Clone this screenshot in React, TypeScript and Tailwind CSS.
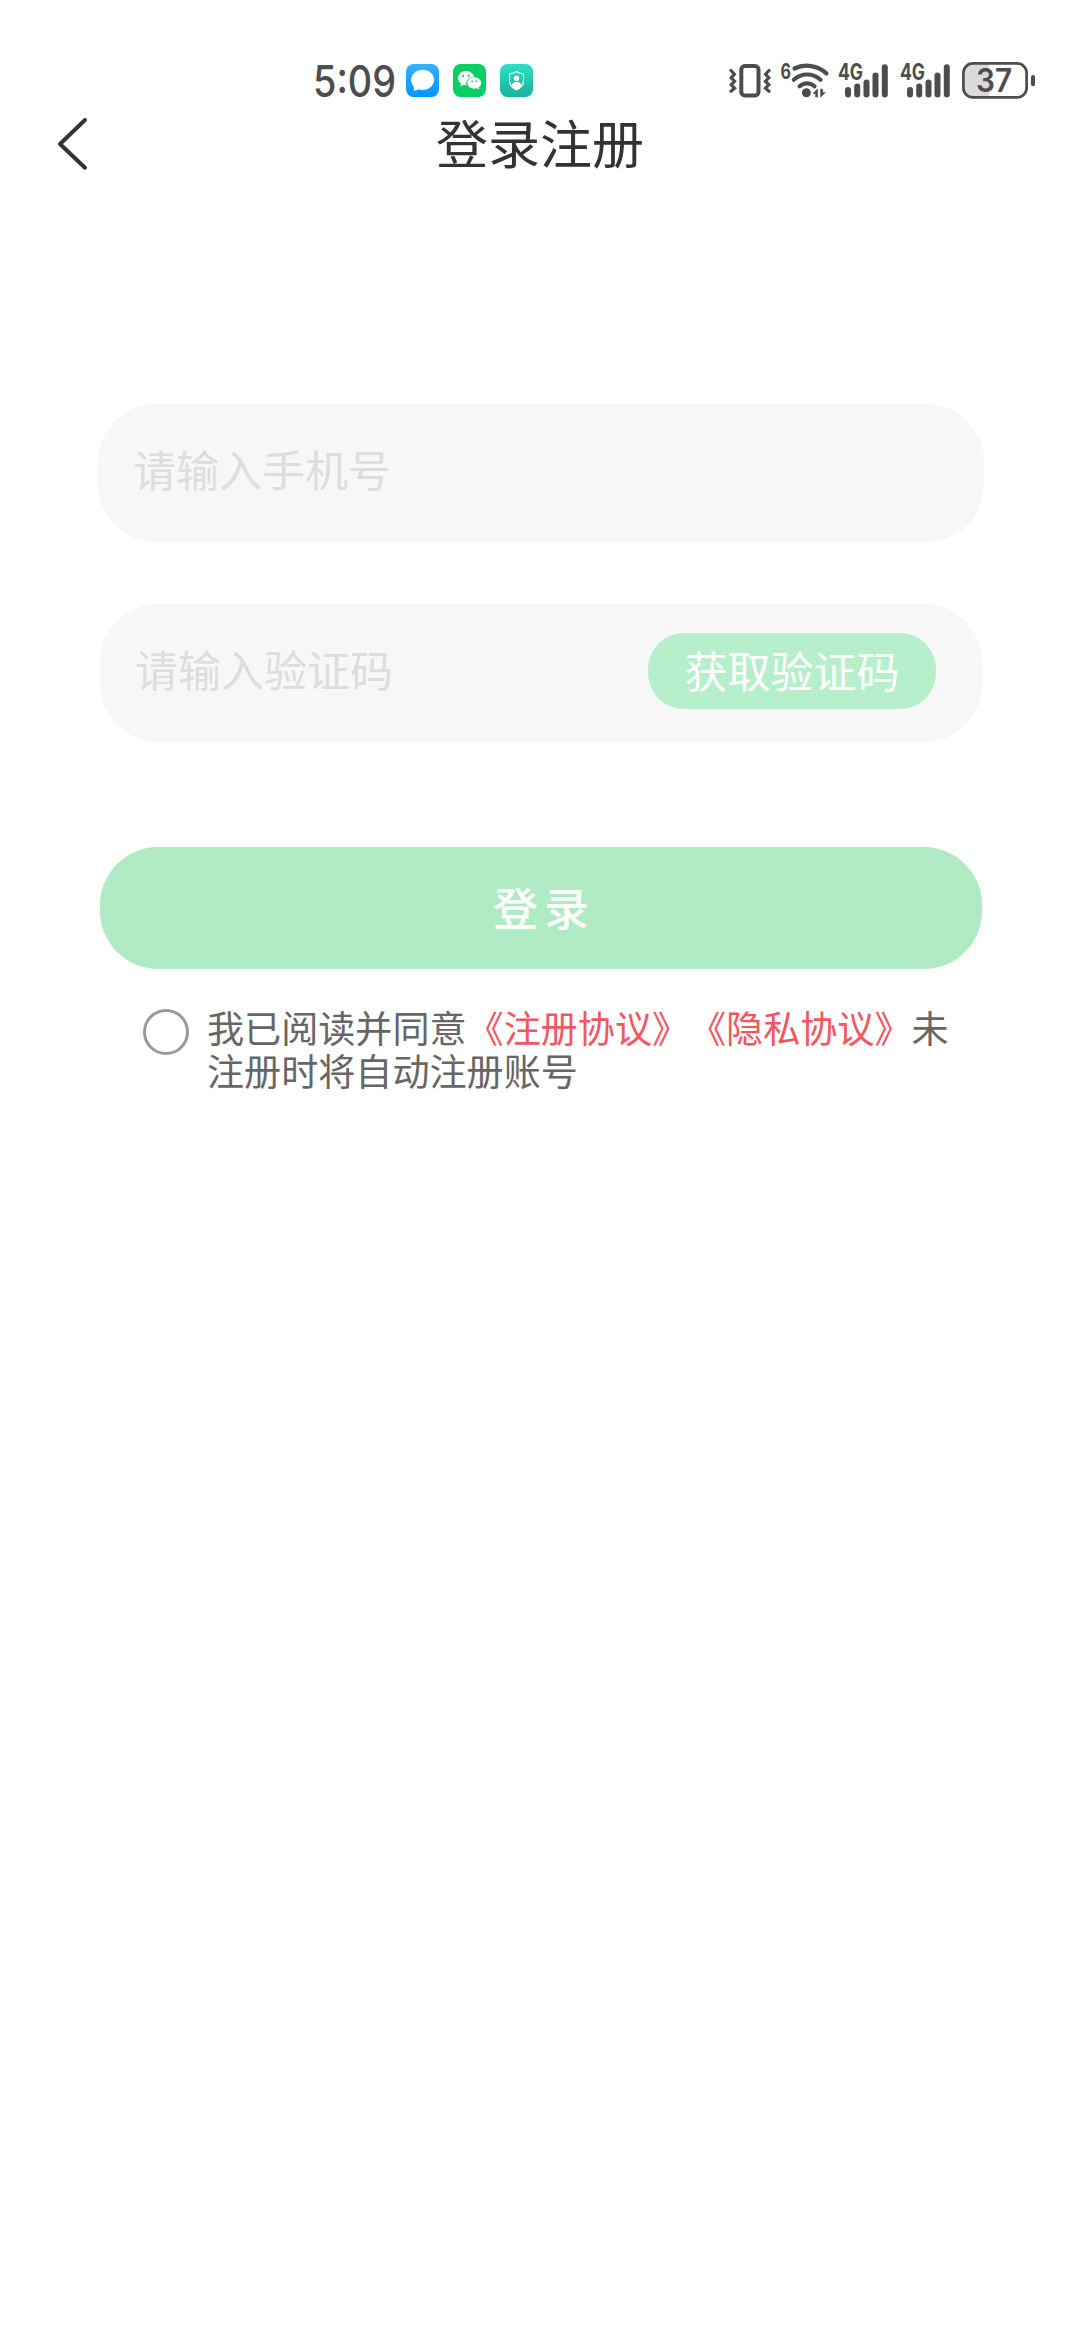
import React from "react";

const INK = "#4d4d4d";

function MessageIcon() {
  return (
    <svg width="33" height="33" viewBox="0 0 33 33">
      <defs>
        <linearGradient id="msg" x1="0" y1="0" x2="0" y2="1">
          <stop offset="0" stopColor="#36b2fe" />
          <stop offset="1" stopColor="#0595ff" />
        </linearGradient>
      </defs>
      <rect width="33" height="33" rx="7.500" fill="url(#msg)" />
      <path
        d="M16.700 5.700C23.200 5.700 28 10 28 15.800S23.200 26 16.700 26c-1.600 0-3-.2-4.300-.7-1.200.8-2.300 1.300-3.800 1.500-.6 0-.9-.4-.8-1 .2-1 .3-2-.1-3.200C6.100 20.800 5.200 18.500 5.200 15.800 5.200 10 10.200 5.700 16.700 5.700z"
        fill="#fff"
      />
    </svg>
  );
}

function WeChatIcon() {
  return (
    <svg width="33" height="33" viewBox="0 0 33 33">
      <rect width="33" height="33" rx="7.500" fill="#07cf64" />
      <path
        d="M12.800 7c4.300 0 7.600 2.600 8.200 6-4.500.1-7.800 3.100-7.800 6.600 0 .6.100 1.100.2 1.600-1.100 0-2-.1-3-.4L7.300 22.400l.8-2.800C6.200 18.300 5 16.400 5 14.200 5 10.200 8.500 7 12.800 7z"
        fill="#fff"
      />
      <path
        d="M21.300 13.200c3.800 0 6.900 2.500 6.900 5.700 0 1.800-1 3.400-2.500 4.400l.6 2.200-2.500-1.300c-.7.2-1.500.3-2.500.3-3.800 0-6.900-2.500-6.900-5.600s3.100-5.700 6.900-5.700z"
        fill="#fff"
      />
      <g fill="#07cf64">
        <circle cx="10.200" cy="11.900" r="1.100" />
        <circle cx="15.700" cy="11.900" r="1.100" />
        <circle cx="19.100" cy="17.300" r=".9" />
        <circle cx="23.500" cy="17.300" r=".9" />
      </g>
    </svg>
  );
}

function GuardIcon() {
  return (
    <svg width="33" height="33" viewBox="0 0 33 33">
      <defs>
        <linearGradient id="guard" x1="0" y1="0" x2="0" y2="1">
          <stop offset="0" stopColor="#2be0c4" />
          <stop offset="1" stopColor="#17b39f" />
        </linearGradient>
      </defs>
      <rect width="33" height="33" rx="7.500" fill="url(#guard)" />
      <path
        d="M16.500 7.600c2 1.500 4.300 2.100 7 2.200v7c0 4.500-3 7.300-7 9-4-1.700-7-4.500-7-9v-7c2.700-.1 5-.7 7-2.200z"
        fill="none"
        stroke="#fff"
        strokeWidth="1.200"
      />
      <circle cx="16.500" cy="14.200" r="2.700" fill="#fff" />
      <path d="M11.500 21.800c.7-2.700 2.600-4 5-4s4.300 1.300 5 4c-1.200 1.900-2.900 3.100-5 4-2.100-.9-3.800-2.100-5-4z" fill="#fff" />
    </svg>
  );
}

function VibrateIcon() {
  return (
    <svg width="42" height="34" viewBox="0 0 42 34" fill="none" stroke={INK}>
      <rect x="12.300" y="2.100" width="17.200" height="29.300" rx="3.500" strokeWidth="4" />
      <path d="M2 6.500l3.400 3.700L2.200 13.800l3.400 3.400-3.400 3.600 3.400 3.400L2 27.200" strokeWidth="3.200" strokeLinecap="round" />
      <path d="M40 6.500l-3.400 3.700 3.200 3.600-3.400 3.400 3.400 3.600-3.400 3.400 3.600 3" strokeWidth="3.200" strokeLinecap="round" />
    </svg>
  );
}

function WifiIcon() {
  return (
    <svg width="49" height="35" viewBox="0 0 49 35" className="overflow-visible">
      <text x="0.500" y="14.500" fontSize="21.500" fontWeight="700" fill={INK} textLength="10.500" lengthAdjust="spacingAndGlyphs" className="font-['Inter',sans-serif]">6</text>
      <g fill="none" stroke={INK} strokeWidth="4.200" strokeLinecap="round">
        <path d="M14.500 4.500C24.500 -.4 38 1.200 46.500 9.500" />
        <path d="M13.800 15.800c7.500-7.100 19.200-7.100 26.700 0" />
        <path d="M19.600 22.300c4.300-4 10.600-4 14.900 0" />
      </g>
      <circle cx="26.400" cy="28.800" r="4.500" fill={INK} />
      <path d="M32.800 29.600l4.800-4.600v8h-2v-3.400zM45.400 28.400L40.600 33v-8h2v3.400z" fill={INK} stroke={INK} strokeWidth=".6" />
    </svg>
  );
}

function SignalIcon() {
  return (
    <svg width="51" height="34" viewBox="0 0 51 34" className="overflow-visible">
      <text x="0" y="16.200" fontSize="22.500" fontWeight="700" fill={INK} textLength="25" lengthAdjust="spacingAndGlyphs" className="font-['Inter',sans-serif]">4G</text>
      <g fill={INK}>
        <rect x="7" y="23" width="6" height="10.500" rx="3" />
        <rect x="16.200" y="19.500" width="6" height="14" rx="3" />
        <rect x="25.500" y="15.500" width="6" height="18" rx="3" />
        <rect x="34.500" y="8.500" width="6" height="25" rx="3" />
        <rect x="43.800" y="0.300" width="6" height="33.200" rx="3" />
      </g>
    </svg>
  );
}

function BatteryIcon() {
  return (
    <svg width="74" height="37" viewBox="0 0 74 37">
      <path d="M10 2h17v33H10a8 8 0 0 1-8-8V10a8 8 0 0 1 8-8z" fill="#dadada" />
      <rect x="1.400" y="1.400" width="63.200" height="34" rx="9.500" fill="none" stroke={INK} strokeWidth="2.700" />
      <rect x="69" y="13" width="4" height="11.300" rx="2" fill={INK} />
      <text x="14" y="30" fontSize="32" fontWeight="600" fill={INK} textLength="36" lengthAdjust="spacingAndGlyphs" className="font-['Inter',sans-serif]">37</text>
    </svg>
  );
}

function StatusBar() {
  return (
    <div className="flex h-[113px] items-start pt-16 pl-[313px]">
      <span className="-mt-[5px] w-[93px] origin-left scale-x-[0.87] font-['Inter',sans-serif] text-[43.5px] leading-[44px] font-[450] whitespace-nowrap text-[#4d4d4d]">
        5:09
      </span>
      <div className="flex gap-[14px]">
        <MessageIcon />
        <WeChatIcon />
        <GuardIcon />
      </div>
      <div className="ml-[196px] flex items-start">
        <VibrateIcon />
        <div className="ml-[9px]"><WifiIcon /></div>
        <div className="ml-[9px]"><SignalIcon /></div>
        <div className="ml-[11px]"><SignalIcon /></div>
        <div className="-mt-[2px] ml-[11px]"><BatteryIcon /></div>
      </div>
    </div>
  );
}

export default function App() {
  return (
    <div className="min-h-[2340px] w-[1080px] overflow-hidden bg-white font-['Noto_Sans_CJK_SC',sans-serif]">
      <StatusBar />
      <header className="grid h-[62px] grid-cols-[436px_1fr_436px] items-center">
        <button className="pl-[56px]" aria-label="返回">
          <svg width="34" height="56" viewBox="0 0 34 56" fill="none" stroke="#333" strokeWidth="4" strokeLinecap="round" strokeLinejoin="round">
            <path d="M29 4L4 28l25 23.700" />
          </svg>
        </button>
        <h1 className="-mt-[4px] text-[52px] leading-[56px] whitespace-nowrap text-[#333]">登录注册</h1>
      </header>

      <main className="pt-[229px] pr-[98px] pl-[100px]">
        <div className="-mx-[2px] flex h-[138px] items-center rounded-[58px] bg-[#f7f7f7] pb-[9px] pl-[35px] text-[43px] leading-[43px] text-[#ddd]">
          请输入手机号
        </div>
        <div className="mt-[62px] flex h-[138px] items-center justify-between rounded-[58px] bg-[#f7f7f7] pr-[46px] pl-[35px]">
          <span className="mb-[9px] text-[43px] leading-[43px] text-[#ddd]">请输入验证码</span>
          <button className="-mt-[4px] flex h-[76px] w-[288px] items-center justify-center rounded-[36px] bg-[#b7efca] pb-[3px] text-[43px] leading-[43px] whitespace-nowrap text-white">
            获取验证码
          </button>
        </div>
        <button className="mt-[105px] flex h-[122px] w-full items-center justify-center rounded-[58px] bg-[#afeac3] pb-[4px] pl-[6px] text-[45px] leading-[45px] font-medium tracking-[6px] text-white">
          登录
        </button>
        <div className="mt-[38px] flex items-start pl-[43px]">
          <span className="mt-[2px] size-[46px] shrink-0 rounded-full border-3 border-[#999]" />
          <div className="-mt-px ml-[18px] w-[750px] text-[37.1px] leading-[43px] whitespace-nowrap text-[#666] [text-spacing-trim:space-all]">
            <p>
              我已阅读并同意<span className="text-[#f25761]">《注册协议》《隐私协议》</span>未
            </p>
            <p>注册时将自动注册账号</p>
          </div>
        </div>
      </main>
    </div>
  );
}
